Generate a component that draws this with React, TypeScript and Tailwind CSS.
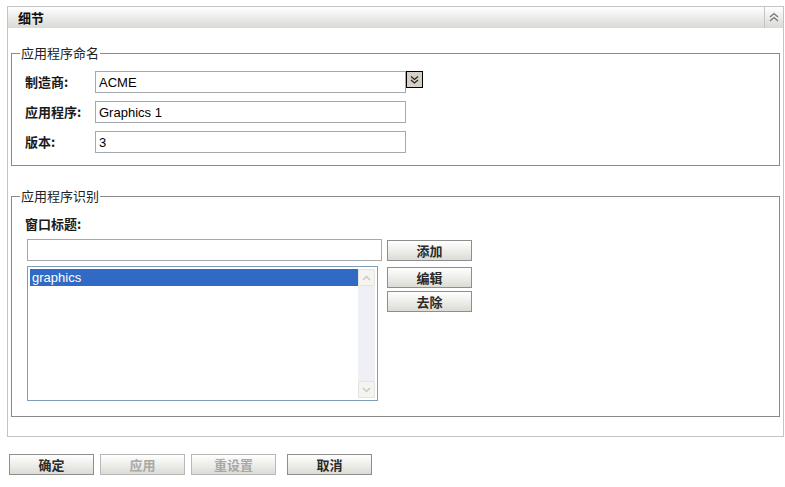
import React from "react";

const cjk = "font-['Noto_Sans_CJK_SC',sans-serif]";
const latin = "font-['Liberation_Sans','Noto_Sans_CJK_SC',sans-serif]";

function Btn({
  label,
  disabled,
  className = "",
}: {
  label: string;
  disabled?: boolean;
  className?: string;
}) {
  return (
    <button
      type="button"
      disabled={disabled}
      className={`flex h-[21px] w-[85px] items-center justify-center border bg-gradient-to-b from-white to-[#dcdcd6] text-[13px] leading-none font-bold ${cjk} ${
        disabled ? "border-[#b8b8b8] text-[#a8a8a8]" : "border-[#8e8e8e] text-[#2a2a2a]"
      } ${className}`}
    >
      {label}
    </button>
  );
}

function TextInput({ value, className = "" }: { value: string; className?: string }) {
  return (
    <input
      readOnly
      value={value}
      className={`h-[22px] border border-[#a5a9ad] bg-white px-[3px] text-[13px] text-black outline-none ${latin} ${className}`}
    />
  );
}

function FieldRow({ label, value, dropdown }: { label: string; value: string; dropdown?: boolean }) {
  return (
    <div className="flex items-start">
      <div className={`w-[70px] pt-[2px] text-[13px] leading-[18px] font-bold text-[#1a1a1a] ${cjk}`}>{label}</div>
      <TextInput value={value} className="w-[311px]" />
      {dropdown && (
        <div className="flex h-[17px] w-[17px] items-center justify-center border border-black bg-[#d4d0c8]">
          <svg width="11" height="11" viewBox="0 0 11 11" fill="none" stroke="#222" strokeWidth="1.2">
            <path d="M2 2.5 L5.5 5.5 L9 2.5" />
            <path d="M2 6 L5.5 9 L9 6" />
          </svg>
        </div>
      )}
    </div>
  );
}

export default function App() {
  return (
    <div className="h-[487px] w-[785px] bg-white pt-[6px] pl-[7px]">
      <div className="flex h-[431px] w-[777px] flex-col border border-[#c4c4c4]">
        <div className="flex h-[21px] items-stretch bg-gradient-to-b from-white to-[#d9d9d5]">
          <div className={`flex flex-1 items-center pl-[10px] text-[13px] font-bold text-[#111] ${cjk}`}>细节</div>
          <div className="flex w-[19px] items-center justify-center border-l border-[#c4c4c4]">
            <svg width="12" height="11" viewBox="0 0 12 11" fill="none" stroke="#777" strokeWidth="1.3">
              <path d="M2 5 L6 1.5 L10 5" />
              <path d="M2 9 L6 5.5 L10 9" />
            </svg>
          </div>
        </div>

        <div className="flex flex-col px-[3px] pt-[17px]">
          <fieldset className="h-[121px] border border-[#8a8a8a] px-[13px] pb-[12px]">
            <legend className={`ml-[-5px] px-[1px] text-[13px] leading-[16px] text-[#222] ${cjk}`}>应用程序命名</legend>
            <div className="mt-[10px] flex flex-col gap-[8px]">
              <FieldRow label="制造商:" value="ACME" dropdown />
              <FieldRow label="应用程序:" value="Graphics 1" />
              <FieldRow label="版本:" value="3" />
            </div>
          </fieldset>

          <fieldset className="mt-[22px] h-[229px] border border-[#8a8a8a] px-[15px] pb-[15px]">
            <legend className={`ml-[-7px] px-[1px] text-[13px] leading-[16px] text-[#222] ${cjk}`}>应用程序识别</legend>
            <div className={`mt-[11px] ml-[-2px] text-[13px] leading-[18px] font-bold text-[#1a1a1a] ${cjk}`}>窗口标题:</div>
            <div className="mt-[6px] flex items-start gap-[5px]">
              <TextInput value="" className="w-[355px]" />
              <Btn label="添加" className="mt-[1px]" />
            </div>
            <div className="mt-[5px] flex items-start gap-[9px]">
              <div className="flex h-[135px] w-[351px] border border-[#7f9db9] bg-white p-[2px]">
                <div className="flex-1">
                  <div className={`h-[17px] bg-[#316ac5] pl-[2px] text-[13px] leading-[17px] text-white ${latin}`}>graphics</div>
                </div>
                <div className="flex w-[17px] flex-col justify-between bg-[#eef0f6]">
                  <div className="flex h-[17px] items-center justify-center rounded-[2px] border border-[#e4e4dc] bg-[#f4f4f0]">
                    <svg width="9" height="6" viewBox="0 0 9 6" fill="none" stroke="#c8c8c4" strokeWidth="1.5">
                      <path d="M1 5 L4.5 1.5 L8 5" />
                    </svg>
                  </div>
                  <div className="flex h-[17px] items-center justify-center rounded-[2px] border border-[#e4e4dc] bg-[#f4f4f0]">
                    <svg width="9" height="6" viewBox="0 0 9 6" fill="none" stroke="#c8c8c4" strokeWidth="1.5">
                      <path d="M1 1 L4.5 4.5 L8 1" />
                    </svg>
                  </div>
                </div>
              </div>
              <div className="flex flex-col gap-[3px] pt-[1px]">
                <Btn label="编辑" className="h-[20px]" />
                <Btn label="去除" className="h-[20px]" />
              </div>
            </div>
          </fieldset>
        </div>
      </div>

      <div className="mt-[17px] ml-[2px] flex">
        <Btn label="确定" />
        <Btn label="应用" disabled className="ml-[6px]" />
        <Btn label="重设置" disabled className="ml-[6px]" />
        <Btn label="取消" className="ml-[11px]" />
      </div>
    </div>
  );
}
